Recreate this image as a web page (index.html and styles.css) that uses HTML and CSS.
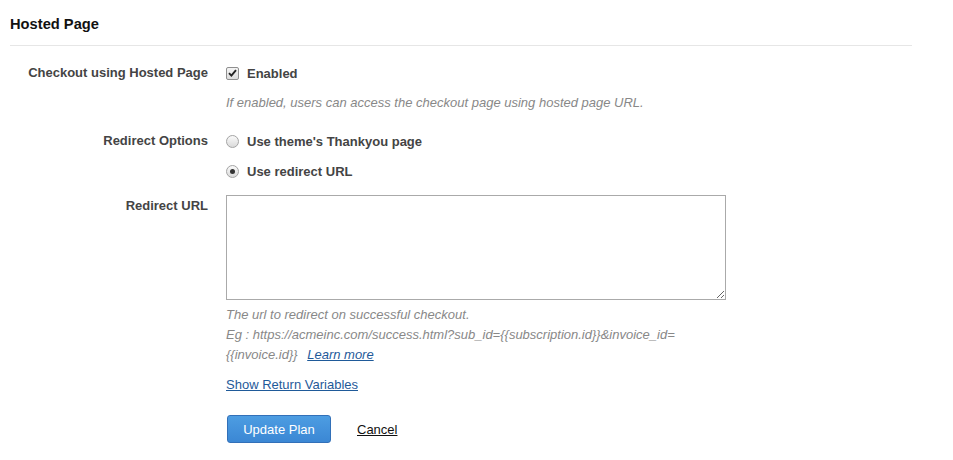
FILE: index.html
```html
<!DOCTYPE html>
<html>
<head>
<meta charset="utf-8">
<link rel="stylesheet" href="styles.css">
</head>
<body>
<div class="page">
  <h2 class="section-title">Hosted Page</h2>
  <div class="form">
    <div class="row row-checkout">
      <div class="label">Checkout using Hosted Page</div>
      <div class="field">
        <label class="option">
          <span class="checkbox"><svg width="9" height="8" viewBox="0 0 9 8"><path d="M1 4.2 L3.4 6.6 L8 1.2" fill="none" stroke="#222" stroke-width="1.9"/></svg></span>
          <span class="option-text">Enabled</span>
        </label>
        <p class="help help-first">If enabled, users can access the checkout page using hosted page URL.</p>
      </div>
    </div>
    <div class="row row-redirect">
      <div class="label">Redirect Options</div>
      <div class="field">
        <label class="option">
          <span class="radio"></span>
          <span class="option-text">Use theme's Thankyou page</span>
        </label>
        <label class="option option-second">
          <span class="radio checked"><span class="dot"></span></span>
          <span class="option-text">Use redirect URL</span>
        </label>
      </div>
    </div>
    <div class="row row-url">
      <div class="label label-top">Redirect URL</div>
      <div class="field">
        <textarea class="url-input"></textarea>
        <p class="help help-url">The url to redirect on successful checkout.<br>Eg : https://acmeinc.com/success.html?sub_id={{subscription.id}}&amp;invoice_id=<br>{{invoice.id}} <a class="learn" href="#">Learn more</a></p>
        <a class="show-vars" href="#">Show Return Variables</a>
        <div class="actions">
          <button class="btn-primary" type="button">Update Plan</button>
          <a class="cancel" href="#">Cancel</a>
        </div>
      </div>
    </div>
  </div>
</div>
</body>
</html>
```

FILE: styles.css
```css
html, body {
  margin: 0;
  padding: 0;
  background: #fff;
}
body {
  font-family: "Liberation Sans", Arial, sans-serif;
  font-size: 13px;
  color: #444;
}
.page {
  padding-left: 10px;
  width: 902px;
}
.section-title {
  margin: 0;
  padding: 16px 0 13px;
  font-size: 14.7px;
  line-height: 16px;
  font-weight: bold;
  color: #111;
  border-bottom: 1px solid #e6e6e6;
}
.form {
  padding-top: 17px;
}
.row {
  display: flex;
  gap: 18px;
}
.label {
  width: 198px;
  flex: none;
  text-align: right;
  font-weight: bold;
  line-height: 20px;
  color: #444;
}
.field {
  flex: 1;
  display: flex;
  flex-direction: column;
  align-items: flex-start;
}
.option {
  display: flex;
  align-items: center;
  height: 20px;
  font-weight: bold;
  color: #444;
}
.option-second {
  margin-top: 10px;
}
.option-text {
  margin-left: 8px;
}
.checkbox {
  width: 11px;
  height: 11px;
  border: 1px solid #8f8f8f;
  border-radius: 2px;
  background: linear-gradient(#f4f4f4, #dcdcdc);
  display: flex;
  align-items: center;
  justify-content: center;
}
.radio {
  width: 11px;
  height: 11px;
  border: 1px solid #a4a4a4;
  border-radius: 50%;
  background: linear-gradient(#fafafa, #dadada);
  display: flex;
  align-items: center;
  justify-content: center;
}
.dot {
  width: 5px;
  height: 5px;
  border-radius: 50%;
  background: #333;
}
.help {
  margin: 0;
  font-style: italic;
  color: #888;
  font-size: 13px;
  line-height: 20px;
}
.help-first {
  margin-top: 10px;
}
.row-redirect {
  margin-top: 18px;
}
.row-url {
  margin-top: 14px;
}
.label-top {
  margin-top: 1px;
}
.url-input {
  box-sizing: border-box;
  width: 500px;
  height: 105px;
  margin: 0;
  border: 1px solid #aaa;
  padding: 4px;
  font-family: inherit;
  font-size: 13px;
}
.help-url {
  margin-top: 5px;
}
.learn {
  color: #1f5a99;
  margin-left: 6px;
}
.show-vars {
  margin-top: 10px;
  line-height: 20px;
  color: #1f5a99;
  font-size: 13px;
}
.actions {
  margin-top: 20px;
  display: flex;
  align-items: center;
  gap: 26px;
}
.btn-primary {
  box-sizing: border-box;
  margin-left: 1px;
  width: 104px;
  height: 28px;
  border: 1px solid #3270b8;
  border-radius: 3px;
  background: linear-gradient(#4d9de2, #3b87d4);
  color: #fff;
  font-family: inherit;
  font-size: 13px;
  padding: 0;
}
.cancel {
  color: #111;
  font-size: 13px;
}
```
